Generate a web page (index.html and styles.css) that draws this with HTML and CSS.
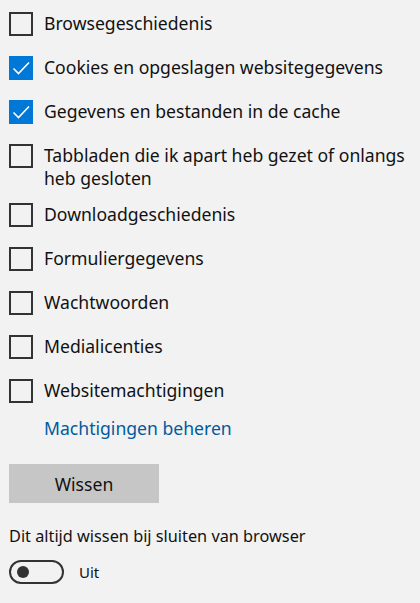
FILE: index.html
```html
<!DOCTYPE html>
<html lang="nl">
<head>
<meta charset="utf-8">
<link rel="stylesheet" href="styles.css">
</head>
<body>
<div class="panel">
  <ul class="options">
    <li class="option"><span class="box"></span><span class="label">Browsegeschiedenis</span></li>
    <li class="option"><span class="box checked"><svg viewBox="0 0 24 24" width="24" height="24"><path d="M4.5 12.5 L9.5 17.5 L20 6.5" fill="none" stroke="#fff" stroke-width="1.6"/></svg></span><span class="label">Cookies en opgeslagen websitegegevens</span></li>
    <li class="option"><span class="box checked"><svg viewBox="0 0 24 24" width="24" height="24"><path d="M4.5 12.5 L9.5 17.5 L20 6.5" fill="none" stroke="#fff" stroke-width="1.6"/></svg></span><span class="label">Gegevens en bestanden in de cache</span></li>
    <li class="option"><span class="box"></span><span class="label">Tabbladen die ik apart heb gezet of onlangs heb gesloten</span></li>
    <li class="option"><span class="box"></span><span class="label">Downloadgeschiedenis</span></li>
    <li class="option"><span class="box"></span><span class="label">Formuliergegevens</span></li>
    <li class="option"><span class="box"></span><span class="label">Wachtwoorden</span></li>
    <li class="option"><span class="box"></span><span class="label">Medialicenties</span></li>
    <li class="option"><span class="box"></span><span class="label">Websitemachtigingen</span></li>
  </ul>
  <a class="manage" href="#">Machtigingen beheren</a>
  <button class="clear" type="button">Wissen</button>
  <p class="always">Dit altijd wissen bij sluiten van browser</p>
  <div class="toggle-row">
    <span class="toggle"><span class="thumb"></span></span>
    <span class="toggle-label">Uit</span>
  </div>
</div>
</body>
</html>
```

FILE: styles.css
```css
html, body {
  margin: 0;
  padding: 0;
  background: #f2f2f2;
}
body {
  font-family: "Noto Sans", "Open Sans", sans-serif;
  color: #111;
  font-size: 17.6px;
}
.panel {
  padding: 12px 0 0 9px;
  display: flex;
  flex-direction: column;
  align-items: flex-start;
}
.options {
  list-style: none;
  margin: 0;
  padding: 0;
  display: flex;
  flex-direction: column;
  gap: 20px;
}
.option {
  display: flex;
  align-items: flex-start;
  gap: 11px;
  min-height: 24px;
}
.box {
  flex: none;
  width: 24px;
  height: 24px;
  box-sizing: border-box;
  border: 2px solid #333;
  display: block;
}
.box.checked {
  border: none;
  background: #0078d7;
}
.box svg { display: block; }
.label {
  line-height: 23px;
  padding-top: 0;
  margin-bottom: -7px;
  max-width: 366px;
}
.manage {
  margin: 14px 0 0 35px;
  color: #005a9e;
  text-decoration: none;
  line-height: 23px;
}
.clear {
  margin-top: 24px;
  width: 150px;
  height: 39px;
  border: none;
  background: #c6c6c6;
  font: inherit;
  color: #111;
  padding: 0;
}
.always {
  margin: 22px 0 0 0;
  line-height: 23px;
  font-size: 16.3px;
}
.toggle-row {
  margin-top: 12px;
  display: flex;
  align-items: center;
  gap: 15px;
}
.toggle {
  width: 55px;
  height: 24px;
  box-sizing: border-box;
  border: 2px solid #333;
  border-radius: 12px;
  display: flex;
  align-items: center;
  padding-left: 6px;
}
.thumb {
  width: 12px;
  height: 12px;
  border-radius: 50%;
  background: #333;
}
.toggle-label {
  font-size: 15px;
}
```
